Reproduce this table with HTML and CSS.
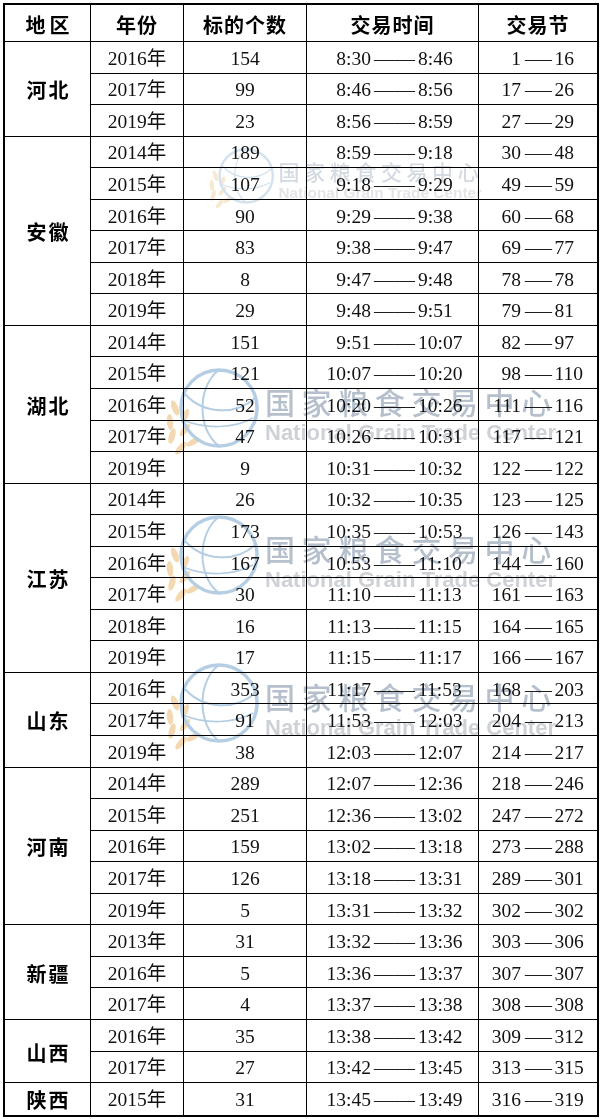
FILE: index.html
```html
<!DOCTYPE html>
<html lang="zh-CN">
<head>
<meta charset="utf-8">
<title>交易节安排</title>
<link rel="stylesheet" href="styles.css">
</head>
<body>
<div class="page">
<table class="sheet">
<thead>
<tr class="hr"><th class="c1 hd-area">地区</th><th class="c2">年份</th><th class="c3">标的个数</th><th class="c4">交易时间</th><th class="c5">交易节</th></tr>
</thead>
<tbody>
<tr><td class="area" rowspan="3">河北</td><td>2016年</td><td>154</td><td><span class="rng"><span class="a">8:30</span><span class="d">——</span><span class="b">8:46</span></span></td><td class="c5"><span class="rng"><span class="a">1</span><span class="d">—</span><span class="b">16</span></span></td></tr>
<tr><td>2017年</td><td>99</td><td><span class="rng"><span class="a">8:46</span><span class="d">——</span><span class="b">8:56</span></span></td><td class="c5"><span class="rng"><span class="a">17</span><span class="d">—</span><span class="b">26</span></span></td></tr>
<tr><td>2019年</td><td>23</td><td><span class="rng"><span class="a">8:56</span><span class="d">——</span><span class="b">8:59</span></span></td><td class="c5"><span class="rng"><span class="a">27</span><span class="d">—</span><span class="b">29</span></span></td></tr>

<tr><td class="area" rowspan="6">安徽</td><td>2014年</td><td>189</td><td><span class="rng"><span class="a">8:59</span><span class="d">——</span><span class="b">9:18</span></span></td><td class="c5"><span class="rng"><span class="a">30</span><span class="d">—</span><span class="b">48</span></span></td></tr>
<tr><td>2015年</td><td>107</td><td><span class="rng"><span class="a">9:18</span><span class="d">——</span><span class="b">9:29</span></span></td><td class="c5"><span class="rng"><span class="a">49</span><span class="d">—</span><span class="b">59</span></span></td></tr>
<tr><td>2016年</td><td>90</td><td><span class="rng"><span class="a">9:29</span><span class="d">——</span><span class="b">9:38</span></span></td><td class="c5"><span class="rng"><span class="a">60</span><span class="d">—</span><span class="b">68</span></span></td></tr>
<tr><td>2017年</td><td>83</td><td><span class="rng"><span class="a">9:38</span><span class="d">——</span><span class="b">9:47</span></span></td><td class="c5"><span class="rng"><span class="a">69</span><span class="d">—</span><span class="b">77</span></span></td></tr>
<tr><td>2018年</td><td>8</td><td><span class="rng"><span class="a">9:47</span><span class="d">——</span><span class="b">9:48</span></span></td><td class="c5"><span class="rng"><span class="a">78</span><span class="d">—</span><span class="b">78</span></span></td></tr>
<tr><td>2019年</td><td>29</td><td><span class="rng"><span class="a">9:48</span><span class="d">——</span><span class="b">9:51</span></span></td><td class="c5"><span class="rng"><span class="a">79</span><span class="d">—</span><span class="b">81</span></span></td></tr>

<tr><td class="area" rowspan="5">湖北</td><td>2014年</td><td>151</td><td><span class="rng"><span class="a">9:51</span><span class="d">——</span><span class="b">10:07</span></span></td><td class="c5"><span class="rng"><span class="a">82</span><span class="d">—</span><span class="b">97</span></span></td></tr>
<tr><td>2015年</td><td>121</td><td><span class="rng"><span class="a">10:07</span><span class="d">——</span><span class="b">10:20</span></span></td><td class="c5"><span class="rng"><span class="a">98</span><span class="d">—</span><span class="b">110</span></span></td></tr>
<tr><td>2016年</td><td>52</td><td><span class="rng"><span class="a">10:20</span><span class="d">——</span><span class="b">10:26</span></span></td><td class="c5"><span class="rng"><span class="a">111</span><span class="d">—</span><span class="b">116</span></span></td></tr>
<tr><td>2017年</td><td>47</td><td><span class="rng"><span class="a">10:26</span><span class="d">——</span><span class="b">10:31</span></span></td><td class="c5"><span class="rng"><span class="a">117</span><span class="d">—</span><span class="b">121</span></span></td></tr>
<tr><td>2019年</td><td>9</td><td><span class="rng"><span class="a">10:31</span><span class="d">——</span><span class="b">10:32</span></span></td><td class="c5"><span class="rng"><span class="a">122</span><span class="d">—</span><span class="b">122</span></span></td></tr>

<tr><td class="area" rowspan="6">江苏</td><td>2014年</td><td>26</td><td><span class="rng"><span class="a">10:32</span><span class="d">——</span><span class="b">10:35</span></span></td><td class="c5"><span class="rng"><span class="a">123</span><span class="d">—</span><span class="b">125</span></span></td></tr>
<tr><td>2015年</td><td>173</td><td><span class="rng"><span class="a">10:35</span><span class="d">——</span><span class="b">10:53</span></span></td><td class="c5"><span class="rng"><span class="a">126</span><span class="d">—</span><span class="b">143</span></span></td></tr>
<tr><td>2016年</td><td>167</td><td><span class="rng"><span class="a">10:53</span><span class="d">——</span><span class="b">11:10</span></span></td><td class="c5"><span class="rng"><span class="a">144</span><span class="d">—</span><span class="b">160</span></span></td></tr>
<tr><td>2017年</td><td>30</td><td><span class="rng"><span class="a">11:10</span><span class="d">——</span><span class="b">11:13</span></span></td><td class="c5"><span class="rng"><span class="a">161</span><span class="d">—</span><span class="b">163</span></span></td></tr>
<tr><td>2018年</td><td>16</td><td><span class="rng"><span class="a">11:13</span><span class="d">——</span><span class="b">11:15</span></span></td><td class="c5"><span class="rng"><span class="a">164</span><span class="d">—</span><span class="b">165</span></span></td></tr>
<tr><td>2019年</td><td>17</td><td><span class="rng"><span class="a">11:15</span><span class="d">——</span><span class="b">11:17</span></span></td><td class="c5"><span class="rng"><span class="a">166</span><span class="d">—</span><span class="b">167</span></span></td></tr>

<tr><td class="area" rowspan="3">山东</td><td>2016年</td><td>353</td><td><span class="rng"><span class="a">11:17</span><span class="d">——</span><span class="b">11:53</span></span></td><td class="c5"><span class="rng"><span class="a">168</span><span class="d">—</span><span class="b">203</span></span></td></tr>
<tr><td>2017年</td><td>91</td><td><span class="rng"><span class="a">11:53</span><span class="d">——</span><span class="b">12:03</span></span></td><td class="c5"><span class="rng"><span class="a">204</span><span class="d">—</span><span class="b">213</span></span></td></tr>
<tr><td>2019年</td><td>38</td><td><span class="rng"><span class="a">12:03</span><span class="d">——</span><span class="b">12:07</span></span></td><td class="c5"><span class="rng"><span class="a">214</span><span class="d">—</span><span class="b">217</span></span></td></tr>

<tr><td class="area" rowspan="5">河南</td><td>2014年</td><td>289</td><td><span class="rng"><span class="a">12:07</span><span class="d">——</span><span class="b">12:36</span></span></td><td class="c5"><span class="rng"><span class="a">218</span><span class="d">—</span><span class="b">246</span></span></td></tr>
<tr><td>2015年</td><td>251</td><td><span class="rng"><span class="a">12:36</span><span class="d">——</span><span class="b">13:02</span></span></td><td class="c5"><span class="rng"><span class="a">247</span><span class="d">—</span><span class="b">272</span></span></td></tr>
<tr><td>2016年</td><td>159</td><td><span class="rng"><span class="a">13:02</span><span class="d">——</span><span class="b">13:18</span></span></td><td class="c5"><span class="rng"><span class="a">273</span><span class="d">—</span><span class="b">288</span></span></td></tr>
<tr><td>2017年</td><td>126</td><td><span class="rng"><span class="a">13:18</span><span class="d">——</span><span class="b">13:31</span></span></td><td class="c5"><span class="rng"><span class="a">289</span><span class="d">—</span><span class="b">301</span></span></td></tr>
<tr><td>2019年</td><td>5</td><td><span class="rng"><span class="a">13:31</span><span class="d">——</span><span class="b">13:32</span></span></td><td class="c5"><span class="rng"><span class="a">302</span><span class="d">—</span><span class="b">302</span></span></td></tr>

<tr><td class="area" rowspan="3">新疆</td><td>2013年</td><td>31</td><td><span class="rng"><span class="a">13:32</span><span class="d">——</span><span class="b">13:36</span></span></td><td class="c5"><span class="rng"><span class="a">303</span><span class="d">—</span><span class="b">306</span></span></td></tr>
<tr><td>2016年</td><td>5</td><td><span class="rng"><span class="a">13:36</span><span class="d">——</span><span class="b">13:37</span></span></td><td class="c5"><span class="rng"><span class="a">307</span><span class="d">—</span><span class="b">307</span></span></td></tr>
<tr><td>2017年</td><td>4</td><td><span class="rng"><span class="a">13:37</span><span class="d">——</span><span class="b">13:38</span></span></td><td class="c5"><span class="rng"><span class="a">308</span><span class="d">—</span><span class="b">308</span></span></td></tr>

<tr><td class="area" rowspan="2">山西</td><td>2016年</td><td>35</td><td><span class="rng"><span class="a">13:38</span><span class="d">——</span><span class="b">13:42</span></span></td><td class="c5"><span class="rng"><span class="a">309</span><span class="d">—</span><span class="b">312</span></span></td></tr>
<tr><td>2017年</td><td>27</td><td><span class="rng"><span class="a">13:42</span><span class="d">——</span><span class="b">13:45</span></span></td><td class="c5"><span class="rng"><span class="a">313</span><span class="d">—</span><span class="b">315</span></span></td></tr>

<tr class="last"><td class="area">陕西</td><td>2015年</td><td>31</td><td><span class="rng"><span class="a">13:45</span><span class="d">——</span><span class="b">13:49</span></span></td><td class="c5"><span class="rng"><span class="a">316</span><span class="d">—</span><span class="b">319</span></span></td></tr>
</tbody>
</table>

<div class="wm wm1" aria-hidden="true">
  <svg class="logo" viewBox="0 0 100 92" width="100" height="92">
    <g fill="#f0d2a4">
      <ellipse cx="12" cy="44" rx="3.2" ry="8" transform="rotate(-20 12 44)"/>
      <ellipse cx="7" cy="58" rx="3.2" ry="8" transform="rotate(-5 7 58)"/>
      <ellipse cx="9" cy="72" rx="3.2" ry="8" transform="rotate(15 9 72)"/>
      <ellipse cx="18" cy="84" rx="3.2" ry="8" transform="rotate(40 18 84)"/>
      <ellipse cx="22" cy="52" rx="3" ry="7.5" transform="rotate(25 22 52)"/>
      <ellipse cx="22" cy="66" rx="3" ry="7.5" transform="rotate(40 22 66)"/>
      <ellipse cx="30" cy="78" rx="3" ry="7.5" transform="rotate(60 30 78)"/>
    </g>
    <g fill="none" stroke="#a9c6de">
      <circle cx="56" cy="44" r="38" stroke-width="3.5"/>
      <path d="M56 6 C 34 22, 34 66, 56 82" stroke-width="2"/>
      <path d="M22 30 C 40 50, 72 52, 92 34" stroke-width="2"/>
      <path d="M20 56 C 44 66, 72 64, 90 54" stroke-width="1.6"/>
    </g>
  </svg>
  <div class="wm-text">
    <div class="wm-cn">国家粮食交易中心</div>
    <div class="wm-en">National Grain Trade Center</div>
  </div>
</div>

<div class="wm wm2" aria-hidden="true">
  <svg class="logo" viewBox="0 0 100 92" width="100" height="92">
    <g fill="#f0d2a4">
      <ellipse cx="12" cy="44" rx="3.2" ry="8" transform="rotate(-20 12 44)"/>
      <ellipse cx="7" cy="58" rx="3.2" ry="8" transform="rotate(-5 7 58)"/>
      <ellipse cx="9" cy="72" rx="3.2" ry="8" transform="rotate(15 9 72)"/>
      <ellipse cx="18" cy="84" rx="3.2" ry="8" transform="rotate(40 18 84)"/>
      <ellipse cx="22" cy="52" rx="3" ry="7.5" transform="rotate(25 22 52)"/>
      <ellipse cx="22" cy="66" rx="3" ry="7.5" transform="rotate(40 22 66)"/>
      <ellipse cx="30" cy="78" rx="3" ry="7.5" transform="rotate(60 30 78)"/>
    </g>
    <g fill="none" stroke="#a9c6de">
      <circle cx="56" cy="44" r="38" stroke-width="3.5"/>
      <path d="M56 6 C 34 22, 34 66, 56 82" stroke-width="2"/>
      <path d="M22 30 C 40 50, 72 52, 92 34" stroke-width="2"/>
      <path d="M20 56 C 44 66, 72 64, 90 54" stroke-width="1.6"/>
    </g>
  </svg>
  <div class="wm-text">
    <div class="wm-cn">国家粮食交易中心</div>
    <div class="wm-en">National Grain Trade Center</div>
  </div>
</div>

<div class="wm wm3" aria-hidden="true">
  <svg class="logo" viewBox="0 0 100 92" width="100" height="92">
    <g fill="#f0d2a4">
      <ellipse cx="12" cy="44" rx="3.2" ry="8" transform="rotate(-20 12 44)"/>
      <ellipse cx="7" cy="58" rx="3.2" ry="8" transform="rotate(-5 7 58)"/>
      <ellipse cx="9" cy="72" rx="3.2" ry="8" transform="rotate(15 9 72)"/>
      <ellipse cx="18" cy="84" rx="3.2" ry="8" transform="rotate(40 18 84)"/>
      <ellipse cx="22" cy="52" rx="3" ry="7.5" transform="rotate(25 22 52)"/>
      <ellipse cx="22" cy="66" rx="3" ry="7.5" transform="rotate(40 22 66)"/>
      <ellipse cx="30" cy="78" rx="3" ry="7.5" transform="rotate(60 30 78)"/>
    </g>
    <g fill="none" stroke="#a9c6de">
      <circle cx="56" cy="44" r="38" stroke-width="3.5"/>
      <path d="M56 6 C 34 22, 34 66, 56 82" stroke-width="2"/>
      <path d="M22 30 C 40 50, 72 52, 92 34" stroke-width="2"/>
      <path d="M20 56 C 44 66, 72 64, 90 54" stroke-width="1.6"/>
    </g>
  </svg>
  <div class="wm-text">
    <div class="wm-cn">国家粮食交易中心</div>
    <div class="wm-en">National Grain Trade Center</div>
  </div>
</div>

<div class="wm wm4" aria-hidden="true">
  <svg class="logo" viewBox="0 0 100 92" width="100" height="92">
    <g fill="#f0d2a4">
      <ellipse cx="12" cy="44" rx="3.2" ry="8" transform="rotate(-20 12 44)"/>
      <ellipse cx="7" cy="58" rx="3.2" ry="8" transform="rotate(-5 7 58)"/>
      <ellipse cx="9" cy="72" rx="3.2" ry="8" transform="rotate(15 9 72)"/>
      <ellipse cx="18" cy="84" rx="3.2" ry="8" transform="rotate(40 18 84)"/>
      <ellipse cx="22" cy="52" rx="3" ry="7.5" transform="rotate(25 22 52)"/>
      <ellipse cx="22" cy="66" rx="3" ry="7.5" transform="rotate(40 22 66)"/>
      <ellipse cx="30" cy="78" rx="3" ry="7.5" transform="rotate(60 30 78)"/>
    </g>
    <g fill="none" stroke="#a9c6de">
      <circle cx="56" cy="44" r="38" stroke-width="3.5"/>
      <path d="M56 6 C 34 22, 34 66, 56 82" stroke-width="2"/>
      <path d="M22 30 C 40 50, 72 52, 92 34" stroke-width="2"/>
      <path d="M20 56 C 44 66, 72 64, 90 54" stroke-width="1.6"/>
    </g>
  </svg>
  <div class="wm-text">
    <div class="wm-cn">国家粮食交易中心</div>
    <div class="wm-en">National Grain Trade Center</div>
  </div>
</div>
</div>
</body>
</html>
```

FILE: styles.css
```css
html, body {
  margin: 0;
  padding: 0;
  background: #ffffff;
}

.page {
  position: relative;
  width: 603px;
  height: 1119px;
  box-sizing: border-box;
  padding: 3px 0 0 3px;
  overflow: hidden;
}

.sheet {
  border-collapse: separate;
  border-spacing: 0;
  border: 2px solid #000;
  width: 596px;
  table-layout: fixed;
  color: #111;
  font-family: "Liberation Serif", "Noto Sans CJK SC", serif;
  font-size: 19.5px;
  line-height: 22px;
}

.sheet th,
.sheet td {
  box-sizing: border-box;
  padding: 3px 0 0 0;
  border-right: 1px solid #000;
  border-bottom: 1px solid #000;
  text-align: center;
  vertical-align: middle;
  white-space: nowrap;
}

.sheet .c1 { width: 86px; }
.sheet .c2 { width: 93px; }
.sheet .c3 { width: 123px; }
.sheet .c4 { width: 172px; }
.sheet .c5 { width: 118px; border-right: none; }

.sheet tr { height: 31.56px; }
.sheet tr.hr { height: 37px; }
.sheet tr.last td { border-bottom: none; }

.sheet th {
  padding-top: 4px;
  font-family: "Noto Sans CJK SC", sans-serif;
  font-weight: 700;
  font-size: 20px;
  letter-spacing: 1px;
  color: #000;
}

.sheet th.hd-area { letter-spacing: 4px; text-indent: 4px; }

.area {
  font-family: "Noto Sans CJK SC", sans-serif;
  font-weight: 700;
  font-size: 20px;
  letter-spacing: 2px;
  text-indent: 2px;
  color: #000;
}

/* range cells: left part right-aligned, dash, right part */
.rng {
  display: flex;
  align-items: baseline;
}

.rng .a {
  text-align: right;
  width: 64px;
}

.rng .d {
  display: inline-block;
  width: 39px;
  margin: 0 5px 0 3px;
  transform: scaleX(1.05);
  transform-origin: left center;
}

.c5 .rng .a { width: 42px; }

.c5 .rng .d {
  width: 19.5px;
  margin: 0 10px 0 4px;
  transform: scaleX(1.38);
}

/* watermark overlays */
.wm {
  position: absolute;
  display: flex;
  align-items: flex-start;
  mix-blend-mode: multiply;
  pointer-events: none;
  transform-origin: top left;
}

.wm .logo {
  flex: none;
  display: block;
}

.wm-text {
  margin-left: 2px;
  padding-top: 21px;
}

.wm-cn {
  font-family: "Noto Sans CJK SC", sans-serif;
  font-weight: 500;
  font-size: 30px;
  line-height: 32px;
  letter-spacing: 6.6px;
  color: #a9b5c4;
  white-space: nowrap;
}

.wm-en {
  font-family: "Liberation Sans", Arial, sans-serif;
  font-weight: 700;
  font-size: 22px;
  line-height: 24px;
  color: #c6cacf;
  white-space: nowrap;
  margin-top: 4px;
}

.wm1 { left: 207px; top: 145px; transform: scale(0.7); opacity: 0.5; }
.wm2 { left: 163px; top: 364px; opacity: 0.85; }
.wm3 { left: 163px; top: 511px; opacity: 0.85; }
.wm4 { left: 163px; top: 659px; opacity: 0.85; }
```
